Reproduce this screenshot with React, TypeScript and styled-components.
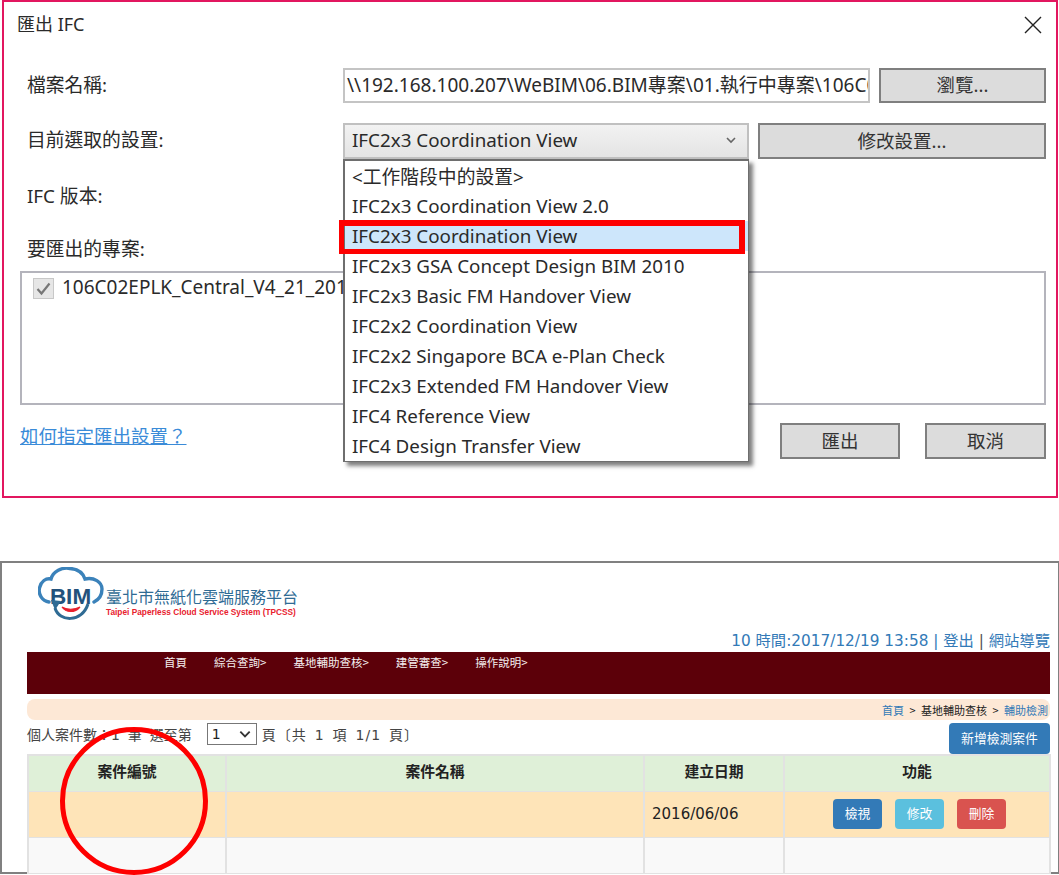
import styled, { createGlobalStyle } from "styled-components";

const GlobalStyle = createGlobalStyle`
  html, body {
    margin: 0;
    padding: 0;
    background: #fff;
    overflow: hidden;
  }
  * {
    box-sizing: border-box;
  }
`;

const Page = styled.div`
  width: 1059px;
  height: 875px;
  overflow: hidden;
`;

/* top half: the export dialog */

const Dialog = styled.div`
  width: 1056px;
  height: 498px;
  margin-left: 2px;
  padding: 0 10px 0 13px;
  border: 2px solid #e2165f;
  font-family: "Noto Sans", "Noto Sans CJK TC", sans-serif;
  font-size: 18.8px;
  color: #2a2a2a;
`;

const TitleBar = styled.div`
  height: 44px;
  margin-bottom: 22px;
  display: flex;
  align-items: center;
  justify-content: space-between;
`;

const Title = styled.span`
  font-size: 18px;
  margin-top: -3px;
`;

const CloseIcon = styled.svg`
  width: 18px;
  height: 18px;
  margin-right: 4px;
  margin-top: 1px;
  stroke: #222;
  stroke-width: 1.4;
  fill: none;
`;

const Row = styled.div<{ $height: number }>`
  height: ${(p) => p.$height}px;
  margin-bottom: 20px;
  display: grid;
  grid-template-columns: 316px 1fr;
  padding-left: 10px;
  align-items: center;
`;

const Label = styled.span`
  padding-bottom: 4px;
`;

const LabelRow = styled.div`
  height: 30px;
  margin-bottom: 6px;
  padding: 0 0 4px 10px;
  display: flex;
  align-items: center;
`;

const Fields = styled.div`
  display: flex;
  height: 100%;
  align-items: stretch;
`;

const PathInput = styled.div`
  width: 527px;
  margin-right: 9px;
  border: 2px solid #c4c4c4;
  padding: 0 0 3px 2px;
  display: flex;
  align-items: center;
  overflow: hidden;
  white-space: nowrap;
  font-size: 19px;
`;

const GreyButton = styled.div<{ $width: number }>`
  width: ${(p) => p.$width}px;
  padding-bottom: 3px;
  background: #dcdcdc;
  border: 2px solid #7f7f7f;
  display: flex;
  align-items: center;
  justify-content: center;
  color: #333;
  font-size: 18.5px;
`;

const SelectWrap = styled.div`
  position: relative;
  width: 406px;
  margin-right: 9px;
`;

const SelectBox = styled.div`
  height: 100%;
  padding: 0 10px 3px 7px;
  background: linear-gradient(#f2f2f2, #e4e4e4);
  border: 2px solid #c0c0c0;
  display: flex;
  align-items: center;
  justify-content: space-between;
`;

const Popup = styled.div`
  position: absolute;
  top: 100%;
  left: 0;
  width: 406px;
  height: 303px;
  background: #fff;
  border: 2px solid #6e6e6e;
  border-right-width: 1px;
  border-bottom-width: 1px;
  box-shadow: 4px 4px 4px rgba(0, 0, 0, 0.5);
  z-index: 2;
`;

const PopupItem = styled.div<{ $selected?: boolean }>`
  position: relative;
  height: 30px;
  padding-left: 7px;
  display: flex;
  align-items: center;
  white-space: nowrap;
  background: ${(p) => (p.$selected ? "#cde6fb" : "transparent")};
`;

const RedFrame = styled.span`
  position: absolute;
  left: -6px;
  right: 3px;
  top: -1px;
  bottom: -3px;
  border: 6px solid #fe0000;
  border-left-width: 5px;
  border-bottom-width: 5px;
`;

const ProjectBox = styled.div`
  height: 134px;
  margin-left: 3px;
  margin-bottom: 18px;
  padding: 3px 0 0 11px;
  border: 2px solid #b4b4bc;
  display: flex;
  align-items: flex-start;
  gap: 8px;
  white-space: nowrap;
  overflow: hidden;
  font-size: 19px;
  line-height: 22px;
`;

const CheckBox = styled.svg`
  width: 21px;
  height: 21px;
  flex: none;
  margin-top: 2px;
`;

const Footer = styled.div`
  height: 36px;
  margin-left: 3px;
  display: flex;
  align-items: center;
  justify-content: space-between;
`;

const HelpLink = styled.a`
  color: #3a8bd8;
  text-decoration: underline;
  font-size: 18.5px;
  margin-top: -12px;
`;

const FooterButtons = styled.div`
  display: flex;
  height: 100%;
  gap: 25px;
`;

/* bottom half: the web page */

const WebFrame = styled.div`
  position: relative;
  width: 1059px;
  height: 313px;
  margin-top: 63px;
  padding: 0 8px 0 25px;
  border: 2px solid #808080;
  border-right-width: 1px;
  font-family: "DejaVu Sans", "Noto Sans CJK TC", sans-serif;
  color: #333;
`;

const Brand = styled.div`
  height: 59px;
  padding-top: 4px;
  margin-left: 11px;
  display: flex;
  align-items: flex-start;
  gap: 2px;
`;

const BrandText = styled.div`
  padding-top: 18px;
  display: flex;
  flex-direction: column;
`;

const BrandName = styled.span`
  font-family: "Noto Sans CJK TC", sans-serif;
  font-size: 16px;
  line-height: 22px;
  color: #2f6b94;
  white-space: nowrap;
`;

const BrandSub = styled.span`
  font-family: "Liberation Sans", sans-serif;
  font-size: 8.3px;
  font-weight: 700;
  line-height: 10px;
  color: #e8212e;
  white-space: nowrap;
`;

const UserLine = styled.div`
  height: 30px;
  padding-top: 9px;
  text-align: right;
  font-size: 15.3px;
  line-height: 20px;
  color: #337ab7;
  white-space: nowrap;
`;

const UserDivider = styled.span<{ $dark?: boolean }>`
  color: ${(p) => (p.$dark ? "#555" : "#337ab7")};
`;

const NavBar = styled.div`
  height: 42px;
  padding: 2px 0 0 137px;
  background: #5c0009;
  display: flex;
  gap: 27px;
  font-family: "Noto Sans CJK TC", sans-serif;
  font-size: 11.5px;
  line-height: 17px;
  color: #f4eeee;
`;

const Breadcrumb = styled.div`
  height: 21px;
  margin-top: 5px;
  padding-right: 2px;
  background: #fde8d6;
  border-radius: 8px;
  display: flex;
  align-items: center;
  justify-content: flex-end;
  font-family: "Noto Sans CJK TC", sans-serif;
  font-size: 11px;
  word-spacing: 3px;
  color: #222;
  white-space: pre;
`;

const CrumbLink = styled.span`
  color: #337ab7;
`;

const PagerRow = styled.div`
  height: 31px;
  margin-top: 3px;
  display: flex;
  align-items: flex-start;
  justify-content: space-between;
`;

const PagerText = styled.div`
  display: flex;
  align-items: center;
  height: 22px;
  font-size: 14px;
  word-spacing: 3.5px;
  color: #444;
  white-space: nowrap;
`;

const PagerTail = styled.span`
  letter-spacing: 1px;
  word-spacing: 2.5px;
`;

const PageSelect = styled.div`
  width: 50px;
  height: 22px;
  margin: 0 5px 0 15px;
  padding: 0 4px;
  border: 1px solid #777;
  display: flex;
  align-items: center;
  justify-content: space-between;
  font-size: 14px;
  color: #222;
`;

const ActionButton = styled.div<{ $color: string; $width: number; $height: number }>`
  width: ${(p) => p.$width}px;
  height: ${(p) => p.$height}px;
  padding-bottom: 3px;
  background: ${(p) => p.$color};
  border-radius: 4px;
  display: flex;
  align-items: center;
  justify-content: center;
  color: #fff;
  font-family: "Noto Sans CJK TC", sans-serif;
  font-size: 12.8px;
`;

const CaseTable = styled.table`
  width: 1022px;
  table-layout: fixed;
  border-collapse: collapse;
  font-size: 15px;
`;

const HeadRow = styled.tr`
  height: 36px;
  background: #dff0d8;
`;

const HeadCell = styled.th<{ $width: number }>`
  width: ${(p) => p.$width}px;
  padding: 0 0 6px;
  border: 2px solid #e2e2e2;
  border-bottom-width: 1px;
  font-family: "Noto Sans CJK TC", sans-serif;
  font-size: 14.8px;
  font-weight: 700;
  color: #222;
`;

const BodyRow = styled.tr<{ $bg: string; $height: number }>`
  height: ${(p) => p.$height}px;
  background: ${(p) => p.$bg};
`;

const Cell = styled.td`
  padding: 0 7px;
  border: 2px solid #e2e2e2;
  border-top-width: 1px;
  border-bottom-width: 1px;
  color: #222;
`;

const ActionGroup = styled.div`
  display: flex;
  justify-content: center;
  gap: 13px;
  margin-left: 5px;
`;

const RedCircle = styled.div`
  position: absolute;
  left: 58px;
  top: 164px;
  width: 148px;
  height: 148px;
  border: 5px solid #fe0000;
  border-radius: 50%;
`;

const options = [
  "<工作階段中的設置>",
  "IFC2x3 Coordination View 2.0",
  "IFC2x3 Coordination View",
  "IFC2x3 GSA Concept Design BIM 2010",
  "IFC2x3 Basic FM Handover View",
  "IFC2x2 Coordination View",
  "IFC2x2 Singapore BCA e-Plan Check",
  "IFC2x3 Extended FM Handover View",
  "IFC4 Reference View",
  "IFC4 Design Transfer View",
];

function Chevron({ size, color }: { size: number; color: string }) {
  return (
    <svg width={size} height={size} viewBox="0 0 12 12" fill="none" stroke={color} strokeWidth="1.6">
      <path d="M2 4l4 4 4-4" />
    </svg>
  );
}

function BimLogo() {
  return (
    <svg width="66" height="56" viewBox="0 0 66 56">
      <path
        d="M11 35C4 34 0 27 1.5 21C3 14 8 11 13 12C15 4 24 0 32 1.5C40 2 45 6 47 12C56 10 64 15 64 22C64 29 60 33 56 35"
        fill="none"
        stroke="#3b82ba"
        strokeWidth="3.4"
        strokeLinecap="round"
      />
      <text
        x="32.5"
        y="37"
        textAnchor="middle"
        fontFamily="Liberation Sans, sans-serif"
        fontSize="22.5"
        fontWeight="700"
        fill="#23527c"
      >
        BIM
      </text>
      <path d="M24 40C28 46 37 46 42 40C37 43 28 43 24 40Z" fill="#e8212e" stroke="#e8212e" strokeWidth="1.2" />
      <path d="M17 41C21 55 44 56 50 37" fill="none" stroke="#2f6b94" strokeWidth="3" />
      <path d="M13 33L23 34L17 43Z" fill="#2f6b94" />
    </svg>
  );
}

export default function App() {
  return (
    <Page>
      <GlobalStyle />
      <Dialog>
        <TitleBar>
          <Title>匯出 IFC</Title>
          <CloseIcon viewBox="0 0 18 18">
            <path d="M1 1l16 16M17 1L1 17" />
          </CloseIcon>
        </TitleBar>

        <Row $height={35}>
          <Label>檔案名稱:</Label>
          <Fields>
            <PathInput>\\192.168.100.207\WeBIM\06.BIM專案\01.執行中專案\106C02EPLK</PathInput>
            <GreyButton $width={167}>瀏覽...</GreyButton>
          </Fields>
        </Row>

        <Row $height={36}>
          <Label>目前選取的設置:</Label>
          <Fields>
            <SelectWrap>
              <SelectBox>
                IFC2x3 Coordination View
                <Chevron size={12} color="#666" />
              </SelectBox>
              <Popup>
                {options.map((option, i) => (
                  <PopupItem key={option} $selected={i === 2}>
                    {option}
                    {i === 2 && <RedFrame />}
                  </PopupItem>
                ))}
              </Popup>
            </SelectWrap>
            <GreyButton $width={288}>修改設置...</GreyButton>
          </Fields>
        </Row>

        <Row $height={36}>
          <Label>IFC 版本:</Label>
        </Row>

        <LabelRow>要匯出的專案:</LabelRow>
        <ProjectBox>
          <CheckBox viewBox="0 0 21 21">
            <rect x="0.5" y="0.5" width="20" height="20" fill="#e6e6e6" stroke="#c8c8c8" />
            <path d="M4.5 11l4 4.5 8-10" fill="none" stroke="#777" strokeWidth="2.2" />
          </CheckBox>
          106C02EPLK_Central_V4_21_2017
        </ProjectBox>

        <Footer>
          <HelpLink>如何指定匯出設置？</HelpLink>
          <FooterButtons>
            <GreyButton $width={120}>匯出</GreyButton>
            <GreyButton $width={121}>取消</GreyButton>
          </FooterButtons>
        </Footer>
      </Dialog>

      <WebFrame>
        <Brand>
          <BimLogo />
          <BrandText>
            <BrandName>臺北市無紙化雲端服務平台</BrandName>
            <BrandSub>Taipei Paperless Cloud Service System (TPCSS)</BrandSub>
          </BrandText>
        </Brand>

        <UserLine>
          10 時間:2017/12/19 13:58 <UserDivider>|</UserDivider> 登出 <UserDivider $dark>|</UserDivider> 網站導覽
        </UserLine>

        <NavBar>
          <span>首頁</span>
          <span>綜合查詢&gt;</span>
          <span>基地輔助查核&gt;</span>
          <span>建管審查&gt;</span>
          <span>操作說明&gt;</span>
        </NavBar>

        <Breadcrumb>
          <CrumbLink>首頁</CrumbLink>
          {" > 基地輔助查核 > "}
          <CrumbLink>輔助檢測</CrumbLink>
        </Breadcrumb>

        <PagerRow>
          <PagerText>
            個人案件數：1 筆 選至第
            <PageSelect>
              1
              <Chevron size={14} color="#333" />
            </PageSelect>
            <PagerTail>頁〔共 1 項 1/1 頁〕</PagerTail>
          </PagerText>
          <ActionButton $color="#337ab7" $width={101} $height={31}>
            新增檢測案件
          </ActionButton>
        </PagerRow>

        <CaseTable>
          <thead>
            <HeadRow>
              <HeadCell $width={198}>案件編號</HeadCell>
              <HeadCell $width={418}>案件名稱</HeadCell>
              <HeadCell $width={140}>建立日期</HeadCell>
              <HeadCell $width={266}>功能</HeadCell>
            </HeadRow>
          </thead>
          <tbody>
            <BodyRow $bg="#fee4b8" $height={46}>
              <Cell />
              <Cell />
              <Cell>2016/06/06</Cell>
              <Cell>
                <ActionGroup>
                  <ActionButton $color="#337ab7" $width={49} $height={30}>檢視</ActionButton>
                  <ActionButton $color="#5bc0de" $width={49} $height={30}>修改</ActionButton>
                  <ActionButton $color="#d9534f" $width={49} $height={30}>刪除</ActionButton>
                </ActionGroup>
              </Cell>
            </BodyRow>
            <BodyRow $bg="#f9f9f9" $height={36}>
              <Cell />
              <Cell />
              <Cell />
              <Cell />
            </BodyRow>
          </tbody>
        </CaseTable>

        <RedCircle />
      </WebFrame>
    </Page>
  );
}
